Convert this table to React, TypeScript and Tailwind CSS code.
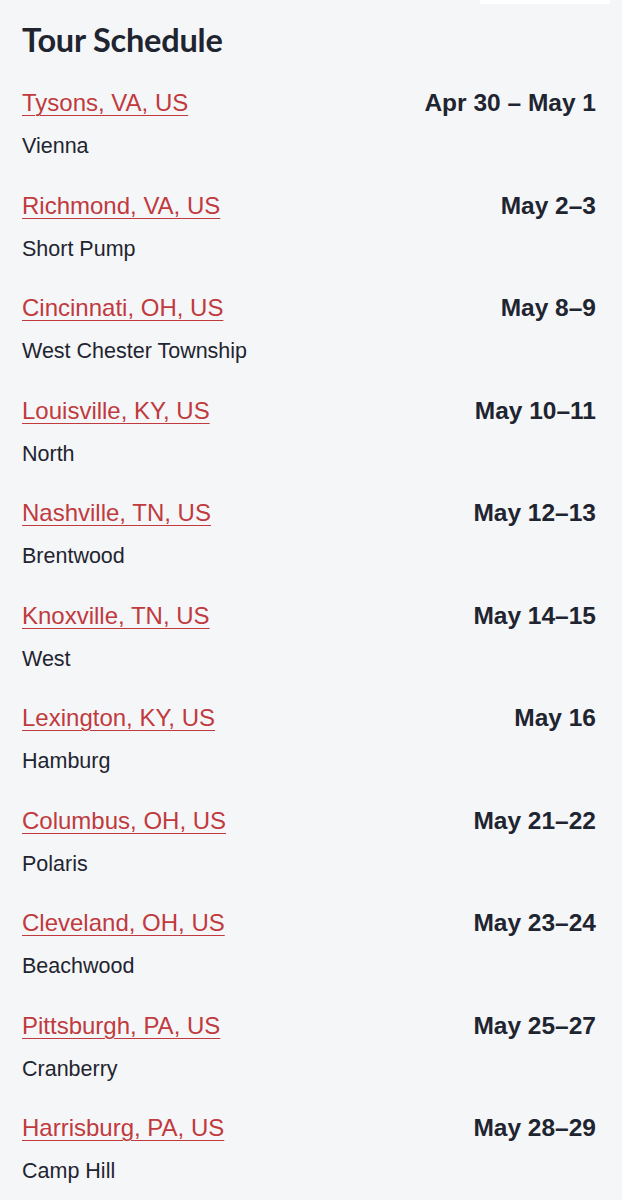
const stops = [
  { city: 'Tysons, VA, US', area: 'Vienna', dates: 'Apr 30 – May 1' },
  { city: 'Richmond, VA, US', area: 'Short Pump', dates: 'May 2–3' },
  { city: 'Cincinnati, OH, US', area: 'West Chester Township', dates: 'May 8–9' },
  { city: 'Louisville, KY, US', area: 'North', dates: 'May 10–11' },
  { city: 'Nashville, TN, US', area: 'Brentwood', dates: 'May 12–13' },
  { city: 'Knoxville, TN, US', area: 'West', dates: 'May 14–15' },
  { city: 'Lexington, KY, US', area: 'Hamburg', dates: 'May 16' },
  { city: 'Columbus, OH, US', area: 'Polaris', dates: 'May 21–22' },
  { city: 'Cleveland, OH, US', area: 'Beachwood', dates: 'May 23–24' },
  { city: 'Pittsburgh, PA, US', area: 'Cranberry', dates: 'May 25–27' },
  { city: 'Harrisburg, PA, US', area: 'Camp Hill', dates: 'May 28–29' },
];

export default function App() {
  return (
    <div className="min-h-[1200px] w-[622px] bg-[#f5f6f8] text-[#1f2530] font-['Liberation_Sans',Arial,sans-serif]">
      <div className="flex justify-end pr-3">
        <div className="h-[4px] w-[130px] bg-white" />
      </div>
      <div className="pl-[22px] pr-[26px]">
        <h1 className="mt-[16px] text-[32.5px] leading-[40px] font-bold font-['Lato',sans-serif] tracking-[-0.2px]">
          Tour Schedule
        </h1>
        <ul className="mt-[28px] flex flex-col">
          {stops.map((s) => (
            <li key={s.city} className="flex h-[102.5px] items-start justify-between">
              <div className="flex flex-col">
                <a href="#" className="text-[24px] leading-[30px] text-[#c03a3e] underline decoration-1 underline-offset-[4px]">
                  {s.city}
                </a>
                <span className="mt-[15px] text-[21.5px] leading-[26px]">{s.area}</span>
              </div>
              <span className="text-[24.5px] leading-[30px] font-bold">{s.dates}</span>
            </li>
          ))}
        </ul>
      </div>
    </div>
  );
}
